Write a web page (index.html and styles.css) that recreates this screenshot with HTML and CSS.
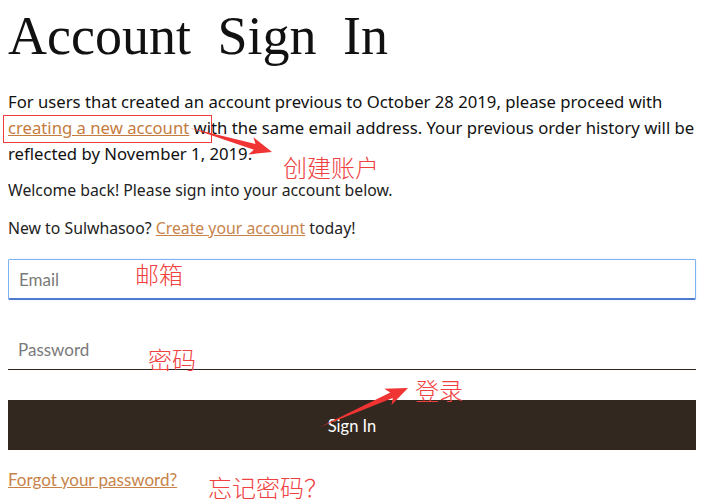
FILE: index.html
```html
<!DOCTYPE html>
<html lang="en">
<head>
    <meta charset="UTF-8">
    <meta name="viewport" content="width=device-width, initial-scale=1.0">
    <title>Account Sign In</title>
    <link rel="stylesheet" href="styles.css">
</head>
<body>

    <div class="signin">
        <h1>Account Sign In</h1>

        <p class="notice">For users that created an account previous to October 28 2019, please proceed with <a href="#">creating a new account</a> with the same email address. Your previous order history will be reflected by November 1, 2019.</p>

        <p class="intro">Welcome back! Please sign into your account below.</p>
        <p class="intro new">New to Sulwhasoo? <a href="#">Create your account</a> today!</p>

        <!-- Форма входу -->
        <form class="form" onsubmit="return false">
            <input type="email" class="field field-email" placeholder="Email">
            <input type="password" class="field field-password" placeholder="Password">
            <button type="submit" class="btn">Sign In</button>
        </form>

        <a href="#" class="forgot">Forgot your password?</a>
    </div>

    <!-- annotations drawn over the screenshot -->
    <div class="notes">
        <svg class="notes-svg" width="707" height="501" viewBox="0 0 707 501">
            <rect x="3.5" y="115.5" width="208" height="27" fill="none" stroke="#ee3b3b" stroke-width="1"/>
            <polygon fill="#f03333" points="190,128 253.9,149.8 248.4,154.4 272,152 253.4,137.2 255.5,144 190,128"/>
            <polygon fill="#f03333" points="320,427 392.8,398 391.5,405.1 408,388 384.3,388.7 390.3,392.5 320,427"/>
        </svg>
        <span class="note note-account">创建账户</span>
        <span class="note note-email">邮箱</span>
        <span class="note note-password">密码</span>
        <span class="note note-login">登录</span>
        <span class="note note-forgot">忘记密码？</span>
    </div>

</body>
</html>
```

FILE: styles.css
```css
body {
    margin: 8px;
    font-family: "Noto Sans", Arial, sans-serif;
    color: #111;
    background-color: #fff;
}

.signin {
    display: flex;
    flex-direction: column;
}

h1 {
    margin: 0;
    font-family: "Liberation Serif", "Times New Roman", serif;
    font-weight: normal;
    font-size: 54px;
    line-height: 56px;
    word-spacing: 13px;
    color: #111;
}

.notice {
    margin: 25px 0 0;
    font-size: 16.7px;
    line-height: 26px;
}

.notice a {
    color: #c57c3f;
}

.intro {
    margin: 10px 0 0;
    font-size: 15.8px;
    line-height: 26px;
    color: #222;
}

.intro.new {
    margin-top: 12px;
}

.intro a {
    color: #c8834a;
}

.form {
    display: flex;
    flex-direction: column;
    margin: 18px 3px 0 0;
}

.field {
    box-sizing: border-box;
    width: 100%;
    padding: 0 10px;
    font-family: Lato, "Noto Sans", sans-serif;
    font-size: 17px;
    color: #333;
    outline: none;
    background: #fff;
}

.field::placeholder {
    color: #7a7a7a;
}

.field-email {
    height: 41px;
    border: 1px solid #7fb0f5;
    border-bottom: 2px solid #4c7bd0;
    border-radius: 2px;
    box-shadow: 0 0 1px #8ab8ff;
}

.field-password {
    height: 40px;
    margin-top: 30px;
    border: none;
    border-bottom: 1px solid #2c2520;
}

.btn {
    height: 50px;
    margin-top: 30px;
    border: none;
    background-color: #33281f;
    color: #fff;
    font-family: Lato, "Noto Sans", sans-serif;
    font-size: 16.5px;
    padding-top: 2px;
    cursor: pointer;
}

.forgot {
    align-self: flex-start;
    margin-top: 17px;
    font-family: Lato, "Noto Sans", sans-serif;
    font-size: 17px;
    line-height: 26px;
    color: #c8834a;
}

.notes {
    position: absolute;
    top: 0;
    left: 0;
    width: 707px;
    height: 501px;
    pointer-events: none;
}

.notes-svg {
    position: absolute;
    top: 0;
    left: 0;
}

.note {
    position: absolute;
    font-family: "Noto Sans CJK SC", sans-serif;
    font-weight: 300;
    font-size: 24px;
    line-height: 25px;
    color: #f04040;
    white-space: nowrap;
}

.note-account { left: 283px; top: 154px; }
.note-email { left: 135px; top: 261px; }
.note-password { left: 148px; top: 346px; }
.note-login { left: 415px; top: 377px; }
.note-forgot { left: 208px; top: 474px; }
```
